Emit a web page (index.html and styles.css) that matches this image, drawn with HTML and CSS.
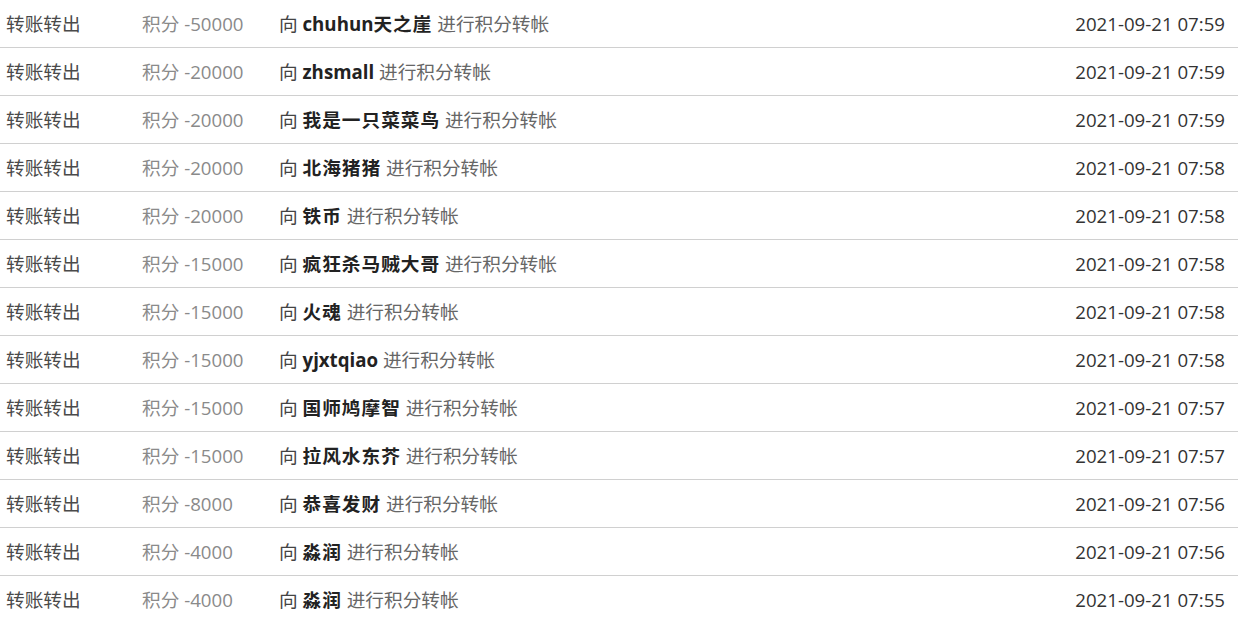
FILE: index.html
```html
<!DOCTYPE html>
<html lang="zh">
<head>
<meta charset="utf-8">
<title>积分记录</title>
<link rel="stylesheet" href="styles.css">
</head>
<body>
<div class="list">
  <div class="row"><span class="type">转账转出</span><span class="amt">积分 -50000</span><span class="desc"><span class="to">向</span> <b>chuhun<span class="cn">天之崖</span></b> 进行积分转帐</span><span class="time">2021-09-21 07:59</span></div>
  <div class="row"><span class="type">转账转出</span><span class="amt">积分 -20000</span><span class="desc"><span class="to">向</span> <b>zhsmall</b> 进行积分转帐</span><span class="time">2021-09-21 07:59</span></div>
  <div class="row"><span class="type">转账转出</span><span class="amt">积分 -20000</span><span class="desc"><span class="to">向</span> <b class="cn">我是一只菜菜鸟</b> 进行积分转帐</span><span class="time">2021-09-21 07:59</span></div>
  <div class="row"><span class="type">转账转出</span><span class="amt">积分 -20000</span><span class="desc"><span class="to">向</span> <b class="cn">北海猪猪</b> 进行积分转帐</span><span class="time">2021-09-21 07:58</span></div>
  <div class="row"><span class="type">转账转出</span><span class="amt">积分 -20000</span><span class="desc"><span class="to">向</span> <b class="cn">铁币</b> 进行积分转帐</span><span class="time">2021-09-21 07:58</span></div>
  <div class="row"><span class="type">转账转出</span><span class="amt">积分 -15000</span><span class="desc"><span class="to">向</span> <b class="cn">疯狂杀马贼大哥</b> 进行积分转帐</span><span class="time">2021-09-21 07:58</span></div>
  <div class="row"><span class="type">转账转出</span><span class="amt">积分 -15000</span><span class="desc"><span class="to">向</span> <b class="cn">火魂</b> 进行积分转帐</span><span class="time">2021-09-21 07:58</span></div>
  <div class="row"><span class="type">转账转出</span><span class="amt">积分 -15000</span><span class="desc"><span class="to">向</span> <b>yjxtqiao</b> 进行积分转帐</span><span class="time">2021-09-21 07:58</span></div>
  <div class="row"><span class="type">转账转出</span><span class="amt">积分 -15000</span><span class="desc"><span class="to">向</span> <b class="cn">国师鸠摩智</b> 进行积分转帐</span><span class="time">2021-09-21 07:57</span></div>
  <div class="row"><span class="type">转账转出</span><span class="amt">积分 -15000</span><span class="desc"><span class="to">向</span> <b class="cn">拉风水东芥</b> 进行积分转帐</span><span class="time">2021-09-21 07:57</span></div>
  <div class="row"><span class="type">转账转出</span><span class="amt">积分 -8000</span><span class="desc"><span class="to">向</span> <b class="cn">恭喜发财</b> 进行积分转帐</span><span class="time">2021-09-21 07:56</span></div>
  <div class="row"><span class="type">转账转出</span><span class="amt">积分 -4000</span><span class="desc"><span class="to">向</span> <b class="cn">淼润</b> 进行积分转帐</span><span class="time">2021-09-21 07:56</span></div>
  <div class="row"><span class="type">转账转出</span><span class="amt">积分 -4000</span><span class="desc"><span class="to">向</span> <b class="cn">淼润</b> 进行积分转帐</span><span class="time">2021-09-21 07:55</span></div>
</div>
</body>
</html>
```

FILE: styles.css
```css
html, body {
  margin: 0;
  padding: 0;
  background: #fff;
}
body {
  font-family: "Open Sans", "Noto Sans CJK SC", sans-serif;
  font-size: 18.67px;
  color: #333;
}
.list {
  width: 1238px;
}
.row {
  box-sizing: border-box;
  display: grid;
  grid-template-columns: 136px 137px 1fr auto;
  align-items: center;
  height: 48px;
  border-bottom: 1px solid #d0d0d0;
  padding: 2px 13px 0 0;
  white-space: nowrap;
  line-height: 1;
}
.type, .amt, .desc {
  padding-left: 6px;
}
.type { color: #4a4a4a; }
.amt { color: #8a8a8a; }
.desc { color: #666; }
.desc .to { color: #444; }
.desc b { color: #222; font-weight: bold; }
.desc .cn { letter-spacing: 1px; }
.time { color: #333; text-align: right; }
```
